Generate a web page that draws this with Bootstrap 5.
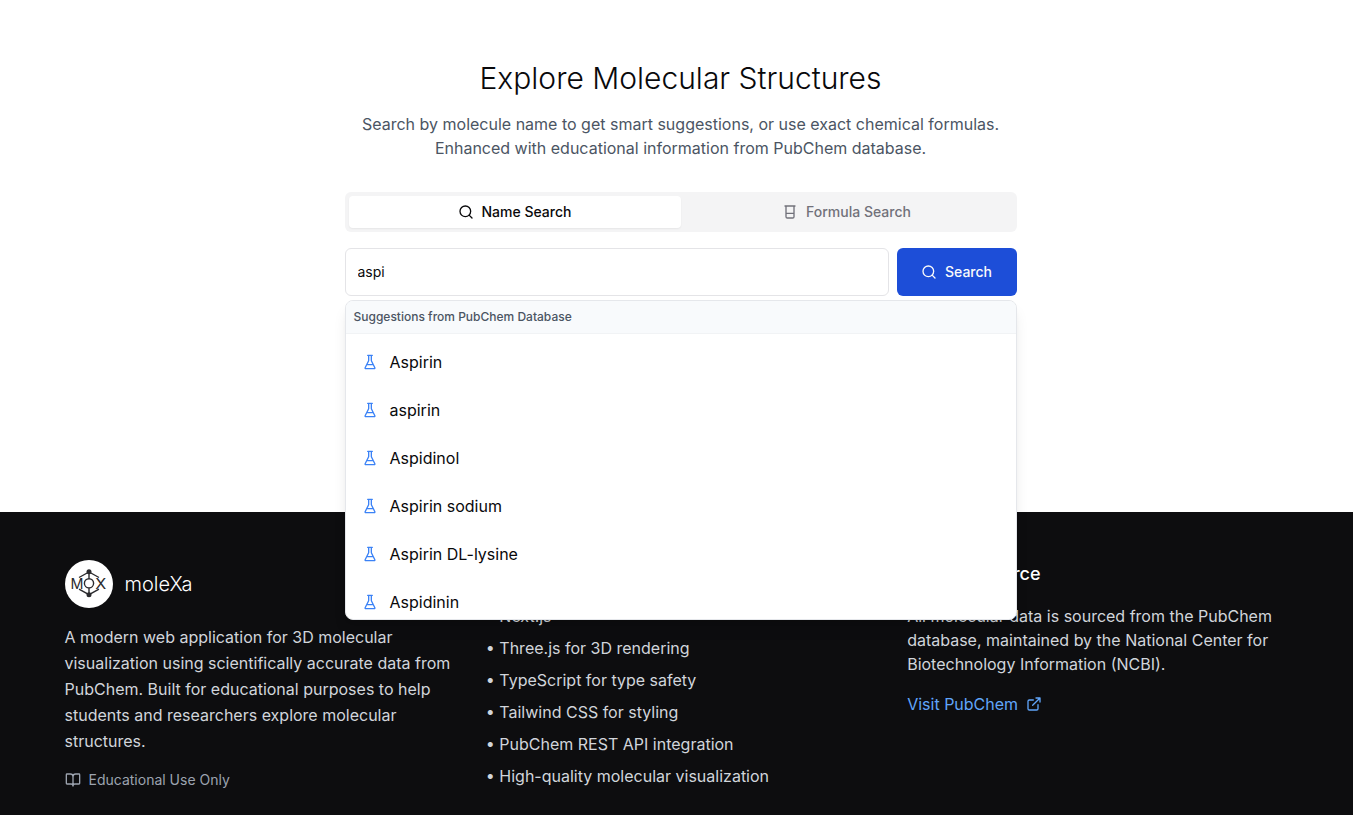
<!DOCTYPE html>
<html lang="en">
<head>
<meta charset="utf-8">
<meta name="viewport" content="width=device-width, initial-scale=1">
<title>moleXa</title>
<link rel="stylesheet" href="https://cdn.jsdelivr.net/npm/bootstrap@5.3.0/dist/css/bootstrap.min.css">
<style>
html{overflow:hidden}
body{width:1361px;height:815px;overflow:hidden;font-family:Inter,"Liberation Sans",sans-serif;font-size:16px;line-height:24px;color:#09090b;background:#fff}
svg.ico{width:16px;height:16px;flex:none;fill:none;stroke:currentColor;stroke-width:2;stroke-linecap:round;stroke-linejoin:round}
.hero{height:512px;padding-top:60px}
.hero-inner{width:672px}
.hero h1{font-size:30px;line-height:36px;font-weight:300;margin-bottom:16px}
.intro{color:#4b5563;margin-bottom:32px}
.tabs{background:#f4f4f5;height:40px;padding:4px;border-radius:6px;margin-bottom:16px;font-size:14px;font-weight:500;color:#71717a}
.tab-item{border-radius:4px}
.tab-item.on{background:#fff;color:#09090b;box-shadow:0 1px 2px rgba(0,0,0,.06)}
.query{height:48px;border:1px solid #e4e4e7;border-radius:6px;padding:0 12px 2px;font-size:14px;color:#09090b}
.go{width:120px;height:48px;background:#1d4ed8;color:#fafafa;border:0;border-radius:6px;font-size:14px;font-weight:500}
.suggest{top:52px;left:0;width:672px;height:320px;background:#fff;border:1px solid #e5e7eb;border-radius:8px;overflow:hidden;z-index:5;box-shadow:0 10px 15px -3px rgba(0,0,0,.1),0 4px 6px -4px rgba(0,0,0,.1)}
.suggest-head{height:33px;padding:8px;background:#f8fafc;border-bottom:1px solid #f1f3f5;font-size:12px;line-height:16px;font-weight:500;color:#4b5563}
.suggest-list{padding-top:4px}
.suggest-row{height:48px;padding:0 16px;gap:12px}
.suggest-row .ico{color:#3b82f6}
.foot{background:#0d0d0f;height:303px;padding-top:48px;color:#d1d5db}
.foot-grid{width:1232px;display:grid;grid-template-columns:repeat(3,1fr);gap:32px}
.foot h3{font-size:18px;line-height:28px;font-weight:500;color:#fff;margin-bottom:16px}
.foot h3 .ico{width:20px;height:20px}
.brand{font-size:20px;line-height:28px;font-weight:300;color:#fff}
.about{line-height:26px;margin:16px 0}
.edu{font-size:14px;line-height:20px;color:#9ca3af}
.tech{display:grid;gap:8px}
.visit{color:#60a5fa}
</style>
</head>
<body>
<svg class="d-none">
<symbol id="search" viewBox="0 0 24 24"><circle cx="11" cy="11" r="8"/><path d="m21 21-4.3-4.3"/></symbol>
<symbol id="beaker" viewBox="0 0 24 24"><path d="M4.5 3h15M6 3v16a2 2 0 0 0 2 2h8a2 2 0 0 0 2-2V3M6 14h12"/></symbol>
<symbol id="flask" viewBox="0 0 24 24"><path d="M10 2v7.527a2 2 0 0 1-.211.896L4.72 20.55a1 1 0 0 0 .9 1.45h12.76a1 1 0 0 0 .9-1.45l-5.069-10.127A2 2 0 0 1 14 9.527V2M8.5 2h7M7 16h10"/></symbol>
<symbol id="book" viewBox="0 0 24 24"><path d="M12 7v14M3 18a1 1 0 0 1-1-1V4a1 1 0 0 1 1-1h5a4 4 0 0 1 4 4 4 4 0 0 1 4-4h5a1 1 0 0 1 1 1v13a1 1 0 0 1-1 1h-6a3 3 0 0 0-3 3 3 3 0 0 0-3-3z"/></symbol>
<symbol id="database" viewBox="0 0 24 24"><ellipse cx="12" cy="5" rx="9" ry="3"/><path d="M3 5v14a9 3 0 0 0 18 0V5M3 12a9 3 0 0 0 18 0"/></symbol>
<symbol id="external" viewBox="0 0 24 24"><path d="M15 3h6v6M10 14 21 3M18 13v6a2 2 0 0 1-2 2H5a2 2 0 0 1-2-2V8a2 2 0 0 1 2-2h6"/></symbol>
</svg>
<main class="hero">
<div class="hero-inner mx-auto">
<h1 class="text-center">Explore Molecular Structures</h1>
<p class="intro text-center">Search by molecule name to get smart suggestions, or use exact chemical formulas.<br>Enhanced with educational information from PubChem database.</p>
<div class="tabs d-flex">
<div class="tab-item on w-50 d-flex align-items-center justify-content-center gap-2"><svg class="ico"><use href="#search"/></svg>Name Search</div>
<div class="tab-item w-50 d-flex align-items-center justify-content-center gap-2"><svg class="ico"><use href="#beaker"/></svg>Formula Search</div>
</div>
<div class="position-relative d-flex gap-2">
<input class="query flex-grow-1" type="text" value="aspi" aria-label="Molecule name">
<button class="go d-flex align-items-center justify-content-center gap-2" type="button"><svg class="ico"><use href="#search"/></svg>Search</button>
<div class="suggest position-absolute">
<div class="suggest-head">Suggestions from PubChem Database</div>
<div class="suggest-list">
<div class="suggest-row d-flex align-items-center"><svg class="ico"><use href="#flask"/></svg>Aspirin</div>
<div class="suggest-row d-flex align-items-center"><svg class="ico"><use href="#flask"/></svg>aspirin</div>
<div class="suggest-row d-flex align-items-center"><svg class="ico"><use href="#flask"/></svg>Aspidinol</div>
<div class="suggest-row d-flex align-items-center"><svg class="ico"><use href="#flask"/></svg>Aspirin sodium</div>
<div class="suggest-row d-flex align-items-center"><svg class="ico"><use href="#flask"/></svg>Aspirin DL-lysine</div>
<div class="suggest-row d-flex align-items-center"><svg class="ico"><use href="#flask"/></svg>Aspidinin</div>
</div>
</div>
</div>
</div>
</main>
<footer class="foot">
<div class="foot-grid mx-auto">
<section>
<div class="brand d-flex align-items-center">
<svg width="48" height="48" viewBox="0 0 48 48" class="me-2 flex-shrink-0"><circle cx="24" cy="24" r="24" fill="#fff"/><g fill="none" stroke="#2b2b2e" stroke-width="1.400"><path d="M14 17.500 24 12l10 5.500M14 29.200 24 34.700l10-5.500M24 12v6.700M24 28v7"/><circle cx="24" cy="23.300" r="4.600"/></g><g fill="#2b2b2e"><circle cx="24" cy="11.700" r="2.500"/><circle cx="24" cy="34.700" r="2.500"/><g font-size="15" font-weight="400"><text x="5.500" y="28.700" textLength="13" lengthAdjust="spacingAndGlyphs">M</text><text x="30.200" y="28.700" textLength="11" lengthAdjust="spacingAndGlyphs">X</text></g></g></svg>
<span class="ms-1">moleXa</span></div>
<p class="about">A modern web application for 3D molecular visualization using scientifically accurate data from PubChem. Built for educational purposes to help students and researchers explore molecular structures.</p>
<div class="edu d-flex align-items-center gap-2"><svg class="ico"><use href="#book"/></svg>Educational Use Only</div>
</section>
<section>
<h3>Technology</h3>
<div class="tech"><div>• Next.js</div><div>• Three.js for 3D rendering</div><div>• TypeScript for type safety</div><div>• Tailwind CSS for styling</div><div>• PubChem REST API integration</div><div>• High-quality molecular visualization</div></div>
</section>
<section>
<h3 class="d-flex align-items-center gap-2"><svg class="ico"><use href="#database"/></svg>Data Source</h3>
<p class="mb-3">All molecular data is sourced from the PubChem database, maintained by the National Center for Biotechnology Information (NCBI).</p>
<a class="visit d-inline-flex align-items-center gap-2 text-decoration-none" href="#">Visit PubChem <svg class="ico"><use href="#external"/></svg></a>
</section>
</div>
</footer>
<script src="https://cdn.jsdelivr.net/npm/bootstrap@5.3.0/dist/js/bootstrap.bundle.min.js"></script>
</body>
</html>
